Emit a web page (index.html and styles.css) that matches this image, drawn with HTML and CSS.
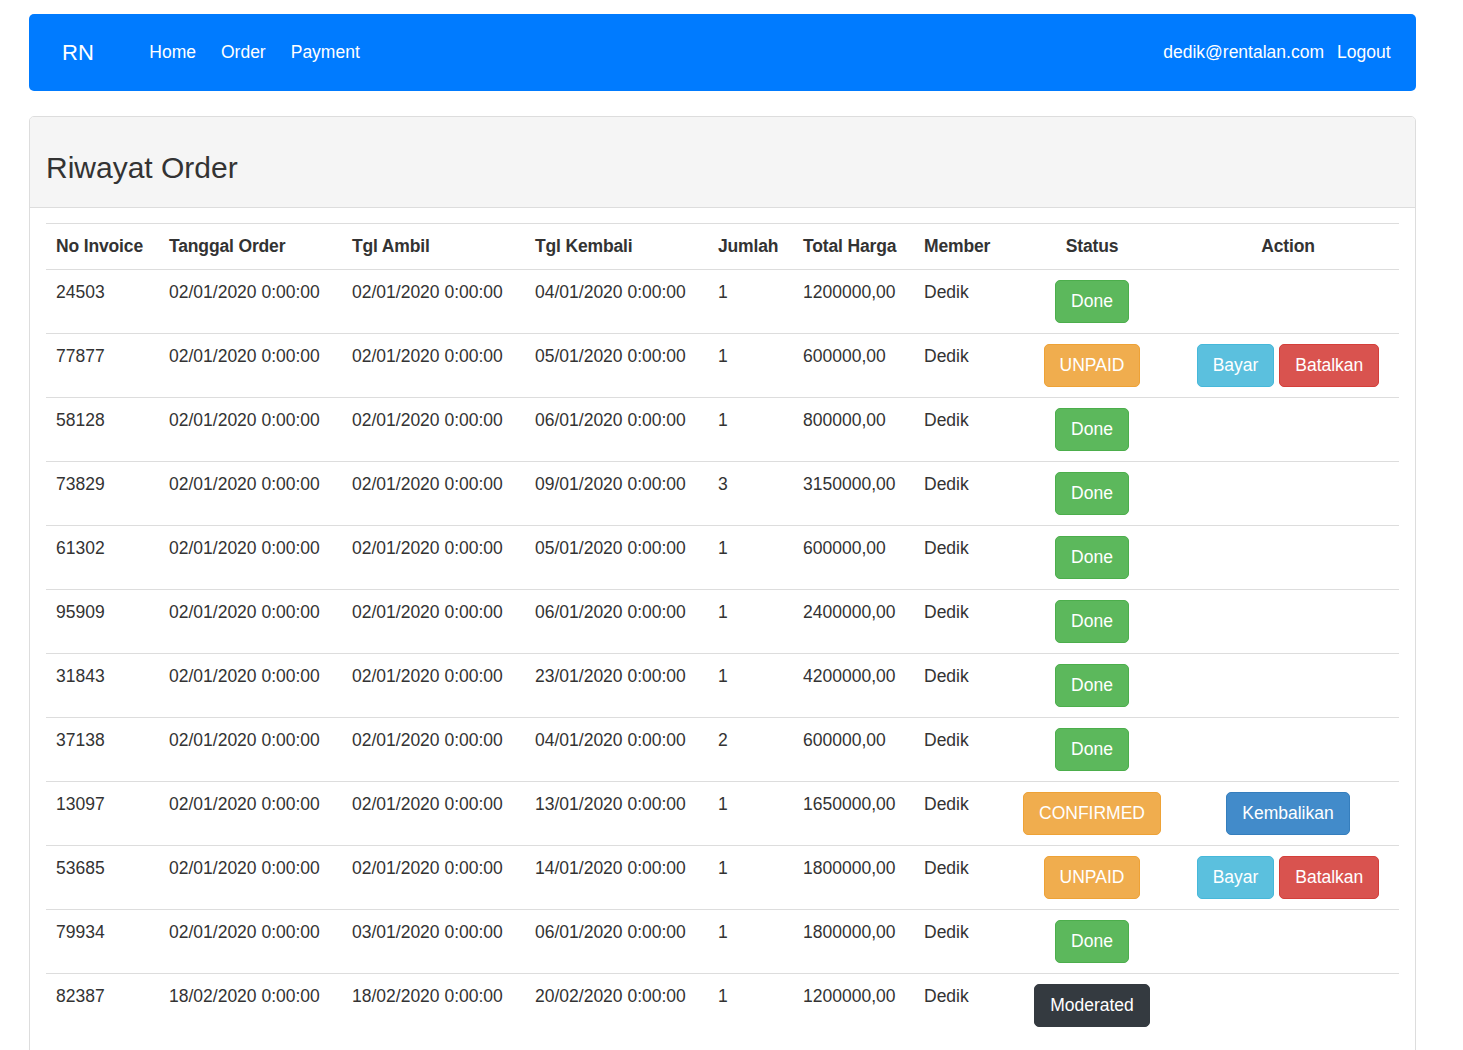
FILE: index.html
```html
<!DOCTYPE html>
<html>
<head>
<meta charset="utf-8">
<title>Riwayat Order</title>
<link rel="stylesheet" href="styles.css">
</head>
<body>
<div class="page">
  <nav class="navbar">
    <a class="brand" href="#">RN</a>
    <ul class="nav">
      <li><a href="#">Home</a></li>
      <li><a href="#">Order</a></li>
      <li><a href="#">Payment</a></li>
    </ul>
    <ul class="nav nav-right">
      <li><a href="#">dedik@rentalan.com</a></li>
      <li><a href="#">Logout</a></li>
    </ul>
  </nav>

  <div class="panel">
    <div class="panel-heading">
      <h3>Riwayat Order</h3>
    </div>
    <div class="panel-body">
      <table class="table">
        <colgroup>
          <col class="c1"><col class="c2"><col class="c3"><col class="c4"><col class="c5"><col class="c6"><col class="c7"><col class="c8"><col class="c9">
        </colgroup>
        <thead>
          <tr>
            <th>No Invoice</th><th>Tanggal Order</th><th>Tgl Ambil</th><th>Tgl Kembali</th><th>Jumlah</th><th>Total Harga</th><th>Member</th><th class="center">Status</th><th class="center">Action</th>
          </tr>
        </thead>
        <tbody>
          <tr><td>24503</td><td>02/01/2020 0:00:00</td><td>02/01/2020 0:00:00</td><td>04/01/2020 0:00:00</td><td>1</td><td>1200000,00</td><td>Dedik</td><td class="center"><a class="btn btn-success">Done</a></td><td class="center"></td></tr>
          <tr><td>77877</td><td>02/01/2020 0:00:00</td><td>02/01/2020 0:00:00</td><td>05/01/2020 0:00:00</td><td>1</td><td>600000,00</td><td>Dedik</td><td class="center"><a class="btn btn-warning">UNPAID</a></td><td class="center"><a class="btn btn-info">Bayar</a> <a class="btn btn-danger">Batalkan</a></td></tr>
          <tr><td>58128</td><td>02/01/2020 0:00:00</td><td>02/01/2020 0:00:00</td><td>06/01/2020 0:00:00</td><td>1</td><td>800000,00</td><td>Dedik</td><td class="center"><a class="btn btn-success">Done</a></td><td class="center"></td></tr>
          <tr><td>73829</td><td>02/01/2020 0:00:00</td><td>02/01/2020 0:00:00</td><td>09/01/2020 0:00:00</td><td>3</td><td>3150000,00</td><td>Dedik</td><td class="center"><a class="btn btn-success">Done</a></td><td class="center"></td></tr>
          <tr><td>61302</td><td>02/01/2020 0:00:00</td><td>02/01/2020 0:00:00</td><td>05/01/2020 0:00:00</td><td>1</td><td>600000,00</td><td>Dedik</td><td class="center"><a class="btn btn-success">Done</a></td><td class="center"></td></tr>
          <tr><td>95909</td><td>02/01/2020 0:00:00</td><td>02/01/2020 0:00:00</td><td>06/01/2020 0:00:00</td><td>1</td><td>2400000,00</td><td>Dedik</td><td class="center"><a class="btn btn-success">Done</a></td><td class="center"></td></tr>
          <tr><td>31843</td><td>02/01/2020 0:00:00</td><td>02/01/2020 0:00:00</td><td>23/01/2020 0:00:00</td><td>1</td><td>4200000,00</td><td>Dedik</td><td class="center"><a class="btn btn-success">Done</a></td><td class="center"></td></tr>
          <tr><td>37138</td><td>02/01/2020 0:00:00</td><td>02/01/2020 0:00:00</td><td>04/01/2020 0:00:00</td><td>2</td><td>600000,00</td><td>Dedik</td><td class="center"><a class="btn btn-success">Done</a></td><td class="center"></td></tr>
          <tr><td>13097</td><td>02/01/2020 0:00:00</td><td>02/01/2020 0:00:00</td><td>13/01/2020 0:00:00</td><td>1</td><td>1650000,00</td><td>Dedik</td><td class="center"><a class="btn btn-warning">CONFIRMED</a></td><td class="center"><a class="btn btn-primary">Kembalikan</a></td></tr>
          <tr><td>53685</td><td>02/01/2020 0:00:00</td><td>02/01/2020 0:00:00</td><td>14/01/2020 0:00:00</td><td>1</td><td>1800000,00</td><td>Dedik</td><td class="center"><a class="btn btn-warning">UNPAID</a></td><td class="center"><a class="btn btn-info">Bayar</a> <a class="btn btn-danger">Batalkan</a></td></tr>
          <tr><td>79934</td><td>02/01/2020 0:00:00</td><td>03/01/2020 0:00:00</td><td>06/01/2020 0:00:00</td><td>1</td><td>1800000,00</td><td>Dedik</td><td class="center"><a class="btn btn-success">Done</a></td><td class="center"></td></tr>
          <tr><td>82387</td><td>18/02/2020 0:00:00</td><td>18/02/2020 0:00:00</td><td>20/02/2020 0:00:00</td><td>1</td><td>1200000,00</td><td>Dedik</td><td class="center"><a class="btn btn-dark">Moderated</a></td><td class="center"></td></tr>
        </tbody>
      </table>
    </div>
  </div>
</div>
</body>
</html>
```

FILE: styles.css
```css
* { box-sizing: border-box; }

html, body {
  margin: 0;
  padding: 0;
  background: #fff;
}

body {
  font-family: "Liberation Sans", Arial, Helvetica, sans-serif;
  font-size: 17.5px;
  line-height: 25px;
  color: #333;
}

a { text-decoration: none; }

.page {
  width: 1387px;
  margin: 14px 0 0 29px;
}

/* Navbar */
.navbar {
  display: flex;
  align-items: center;
  height: 77px;
  background: #007bff;
  border-radius: 5px;
  padding: 0 19px 0 33px;
}

.brand {
  color: #fff;
  font-size: 22px;
  line-height: 30px;
  margin-right: 43px;
}

.nav {
  display: flex;
  list-style: none;
  margin: 0;
  padding: 0;
}

.nav a {
  display: block;
  color: #fff;
  padding: 10px 12.5px;
  font-size: 17.5px;
  line-height: 25px;
}

.nav-right {
  margin-left: auto;
}

.nav-right a {
  padding: 10px 6.5px;
}

/* Panel */
.panel {
  margin-top: 25px;
  border: 1px solid #ddd;
  border-radius: 5px;
  min-height: 1000px;
}

.panel-heading {
  background: #f5f5f5;
  border-bottom: 1px solid #ddd;
  padding: 12px 16px;
  border-radius: 4px 4px 0 0;
}

.panel-heading h3 {
  margin: 22px 0 11px;
  font-size: 30px;
  line-height: 33px;
  font-weight: 500;
  color: #333;
}

.panel-body {
  padding: 15px 16px;
}

/* Table */
.table {
  width: 1353px;
  border-collapse: collapse;
  table-layout: fixed;
}

.c1 { width: 113px; }
.c2 { width: 183px; }
.c3 { width: 183px; }
.c4 { width: 183px; }
.c5 { width: 85px; }
.c6 { width: 121px; }
.c7 { width: 93px; }
.c8 { width: 170px; }
.c9 { width: 222px; }

.table th,
.table td {
  padding: 10px;
  text-align: left;
  vertical-align: top;
  border-top: 1px solid #ddd;
  white-space: nowrap;
}

.table th {
  font-weight: 700;
  color: #333;
  vertical-align: bottom;
  border-bottom: 1px solid #ddd;
  letter-spacing: -0.15px;
}

.table tbody tr:first-child td { border-top: 0; }

.table .center { text-align: center; }

/* Buttons */
.btn {
  display: inline-block;
  padding: 8px 15px;
  font-size: 17.5px;
  line-height: 25px;
  border: 1px solid transparent;
  border-radius: 5px;
  color: #fff;
  vertical-align: middle;
  cursor: pointer;
}

.btn-success { background: #5cb85c; border-color: #4cae4c; }
.btn-warning { background: #f0ad4e; border-color: #eea236; }
.btn-info { background: #5bc0de; border-color: #46b8da; }
.btn-danger { background: #d9534f; border-color: #d43f3a; }
.btn-primary { background: #428bca; border-color: #357ebd; }
.btn-dark { background: #343a40; border-color: #343a40; }
```
